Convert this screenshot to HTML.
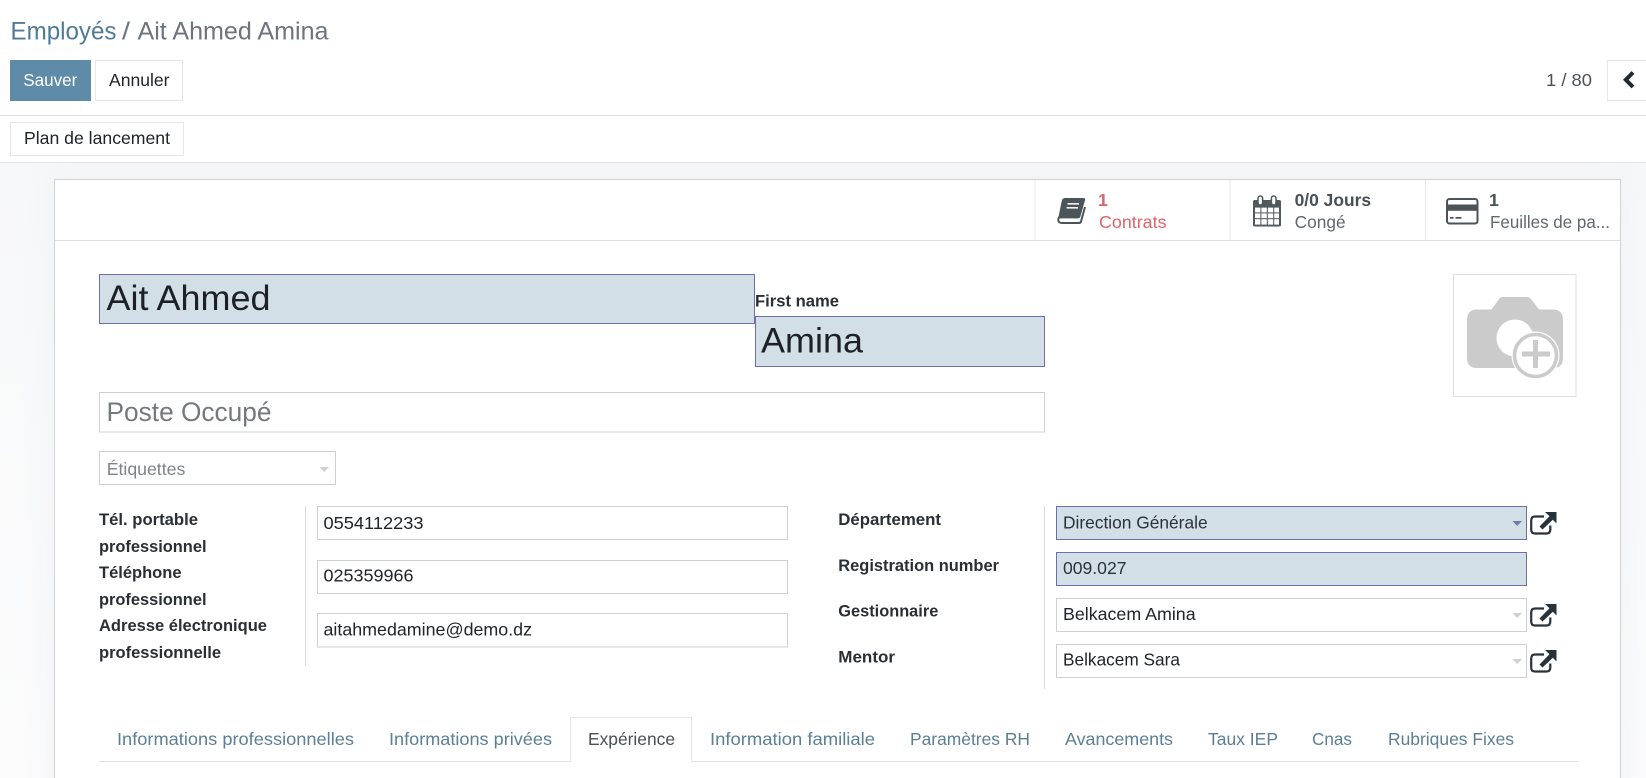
<!DOCTYPE html>
<html lang="fr">
<head>
<meta charset="utf-8">
<title>Employés / Ait Ahmed Amina</title>
<style>
html,body{margin:0;padding:0;width:1646px;height:778px;overflow:hidden;background:#fff}
svg{display:block}
text{font-family:"Liberation Sans",Arial,sans-serif;font-size:17.8px;fill:#212529}
.b{font-weight:700}
.lbl{font-size:17px;font-weight:700;fill:#2b2f33}
.tab{fill:#5b7f95;font-size:17.8px}
.box{fill:#fff;stroke:#d0d0d0;stroke-width:1}
.btn{fill:#fff;stroke:#e6e6e6;stroke-width:1}
.req{fill:#d2dfe6;stroke:#6f6fa3;stroke-width:1}
.ext{fill:none;stroke:#27323a;stroke-width:2.2}
</style>
</head>
<body>
<svg width="1646" height="778" viewBox="0 0 1646 778" xmlns="http://www.w3.org/2000/svg">
<defs>
<filter id="sh" x="-5%" y="-10%" width="110%" height="120%"><feGaussianBlur stdDeviation="14"/></filter>
<linearGradient id="bg" x1="0" y1="0" x2="0" y2="1"><stop offset="0" stop-color="#f7f8f9"/><stop offset="1" stop-color="#fcfcfd"/></linearGradient>
<g id="extlink">
<path class="ext" d="M1544 516.5 H1535 Q1531.2 516.5 1531.2 520.5 V529.5 Q1531.2 533.5 1535 533.5 H1546.5 Q1550.3 533.5 1550.3 529.5 V525.5"/>
<path d="M1545 512 H1556.5 V523.5 L1552.8 519.8 L1542.5 529.5 L1539.5 526.5 L1549.5 516.3Z" fill="#27323a"/>
</g>
</defs>

<!-- page background -->
<rect x="0" y="163" width="1646" height="615" fill="url(#bg)"/>
<rect x="46" y="172" width="1584" height="640" fill="#e9ebed" opacity=".4" filter="url(#sh)"/>

<!-- control panel -->
<rect x="0" y="0" width="1646" height="162" fill="#fff"/>
<rect x="0" y="115" width="1646" height="1" fill="#e2e2e2"/>
<rect x="0" y="162" width="1646" height="1" fill="#e2e2e2"/>

<text x="10.5" y="39.3" style="font-size:25px;fill:#4f7b96" textLength="106" lengthAdjust="spacingAndGlyphs">Employés</text>
<text x="122" y="39.3" style="font-size:25px;fill:#6c757d" textLength="8" lengthAdjust="spacingAndGlyphs">/</text>
<text x="137.5" y="39.3" style="font-size:25px;fill:#6c757d" textLength="191" lengthAdjust="spacingAndGlyphs">Ait Ahmed Amina</text>

<rect x="10" y="60" width="81" height="41" fill="#5e8ba8"/>
<text x="23.3" y="86" style="fill:#fff" textLength="54" lengthAdjust="spacingAndGlyphs">Sauver</text>
<rect class="btn" x="95.5" y="60.5" width="87" height="40"/>
<text x="109" y="86" textLength="60.5" lengthAdjust="spacingAndGlyphs">Annuler</text>

<rect class="btn" x="10.5" y="122.5" width="173" height="33"/>
<text x="24" y="144" textLength="146" lengthAdjust="spacingAndGlyphs">Plan de lancement</text>

<text x="1546" y="86" style="fill:#495057" textLength="46" lengthAdjust="spacingAndGlyphs">1 / 80</text>
<rect class="btn" x="1607.5" y="60.5" width="39" height="40"/>
<path d="M1633 72.5 L1625.8 79.8 L1633 87" fill="none" stroke="#1f2a33" stroke-width="4"/>

<!-- sheet -->
<rect x="54.5" y="179.5" width="1566" height="620" fill="#fff" stroke="#d4d4d4" stroke-width="1.1"/>
<rect x="55" y="240" width="1565.5" height="1" fill="#dedede"/>
<rect x="1034.5" y="180" width="1" height="60" fill="#e8e8e8"/>
<rect x="1229.5" y="180" width="1" height="60" fill="#e8e8e8"/>
<rect x="1425" y="180" width="1" height="60" fill="#e8e8e8"/>

<!-- book icon -->
<path d="M1065 198 H1083.5 Q1085.6 198 1085 200.2 L1080.4 216.5 Q1079.9 218.4 1077.8 218.4 H1058.2 L1061.7 201.2 Q1062.4 198 1065 198Z" fill="#4a5459"/>
<path d="M1059 217 Q1056.6 223 1062.5 223 H1079 Q1080.5 223 1081 221.5 L1085 207" fill="none" stroke="#4a5459" stroke-width="2"/>
<path d="M1067.5 203.8 H1079 M1066.6 207.8 H1078" stroke="#eef0f1" stroke-width="1.7"/>

<!-- calendar icon -->
<path d="M1253 201.5 Q1253 200 1255 200 H1279 Q1281 200 1281 201.5 V225 Q1281 226.5 1279 226.5 H1255 Q1253 226.5 1253 225 V201.5Z" fill="#4f595e"/>
<g fill="#fff">
<rect x="1255" y="207.6" width="5.4" height="4.8"/><rect x="1261.4" y="207.6" width="5.4" height="4.8"/><rect x="1267.8" y="207.6" width="5.4" height="4.8"/><rect x="1274.2" y="207.6" width="4.8" height="4.8"/>
<rect x="1255" y="213.4" width="5.4" height="4.8"/><rect x="1261.4" y="213.4" width="5.4" height="4.8"/><rect x="1267.8" y="213.4" width="5.4" height="4.8"/><rect x="1274.2" y="213.4" width="4.8" height="4.8"/>
<rect x="1255" y="219.2" width="5.4" height="5.4"/><rect x="1261.4" y="219.2" width="5.4" height="5.4"/><rect x="1267.8" y="219.2" width="5.4" height="5.4"/><rect x="1274.2" y="219.2" width="4.8" height="5.4"/>
</g>
<rect x="1258" y="196" width="4.6" height="9" rx="2.2" fill="#fff" stroke="#4f595e" stroke-width="1.5"/>
<rect x="1271.4" y="196" width="4.6" height="9" rx="2.2" fill="#fff" stroke="#4f595e" stroke-width="1.5"/>

<!-- credit card icon -->
<rect x="1447" y="199" width="30.5" height="24.5" rx="2.5" fill="#fff" stroke="#4a5459" stroke-width="2"/>
<rect x="1447" y="204.5" width="30.5" height="6.3" fill="#4a5459"/>
<rect x="1450" y="217" width="3.6" height="1.7" fill="#4a5459"/>
<rect x="1455.5" y="217" width="6" height="1.7" fill="#4a5459"/>

<text x="1098" y="206" class="b" style="fill:#d9666a">1</text>
<text x="1099" y="228" style="fill:#d9666a" textLength="67.5" lengthAdjust="spacingAndGlyphs">Contrats</text>
<text x="1294.6" y="206" class="b" style="fill:#495057" textLength="76.5" lengthAdjust="spacingAndGlyphs">0/0 Jours</text>
<text x="1294.6" y="228" style="fill:#5f686f" textLength="51" lengthAdjust="spacingAndGlyphs">Congé</text>
<text x="1489" y="206" class="b" style="fill:#495057">1</text>
<text x="1490" y="228" style="fill:#5f686f" textLength="120" lengthAdjust="spacingAndGlyphs">Feuilles de pa...</text>

<!-- name fields -->
<rect class="req" x="99.5" y="274.5" width="655" height="49"/>
<text x="106.5" y="310" style="font-size:35px;fill:#1d2125" textLength="164" lengthAdjust="spacingAndGlyphs">Ait Ahmed</text>
<text x="755" y="306.5" class="lbl" textLength="84" lengthAdjust="spacingAndGlyphs">First name</text>
<rect class="req" x="755.5" y="316.5" width="289" height="50"/>
<text x="761" y="352.5" style="font-size:35px;fill:#1d2125" textLength="102" lengthAdjust="spacingAndGlyphs">Amina</text>

<rect class="box" x="99.5" y="392.5" width="945" height="39.5"/>
<text x="106.5" y="421" style="font-size:27px;fill:#76797c" textLength="165" lengthAdjust="spacingAndGlyphs">Poste Occupé</text>

<rect class="box" x="99.5" y="451.5" width="236" height="33"/>
<text x="106.7" y="475" style="fill:#7f8488" textLength="78.6" lengthAdjust="spacingAndGlyphs">Étiquettes</text>
<path d="M319.5 467 H329 L324.2 472Z" fill="#cfcfcf"/>

<!-- avatar -->
<rect x="1453.5" y="274.5" width="122.5" height="122" fill="#fff" stroke="#e0e0e0" stroke-width="1"/>
<path d="M1502 297 H1527 Q1529 297 1531 299 L1539 309.5 H1553 Q1563 309.5 1563 320 V358 Q1563 368 1553 368 H1477 Q1467 368 1467 358 V320 Q1467 309.5 1477 309.5 H1491.5 L1499 299 Q1500.5 297 1502 297Z" fill="#cbcbcb"/>
<circle cx="1515" cy="338" r="18.5" fill="#fff"/>
<circle cx="1535.5" cy="355.5" r="24" fill="#fff"/>
<circle cx="1535.5" cy="355.5" r="21" fill="#fff" stroke="#cbcbcb" stroke-width="3.6"/>
<path d="M1522 351.5 H1533 V340 H1538 V351.5 H1550 V356.5 H1538 V368 H1533 V356.5 H1522Z" fill="#cbcbcb"/>

<!-- left group -->
<text x="99" y="525" class="lbl" textLength="99" lengthAdjust="spacingAndGlyphs">Tél. portable</text>
<text x="99" y="552" class="lbl" textLength="107.5" lengthAdjust="spacingAndGlyphs">professionnel</text>
<text x="99" y="578" class="lbl" textLength="82.5" lengthAdjust="spacingAndGlyphs">Téléphone</text>
<text x="99" y="605" class="lbl" textLength="107.5" lengthAdjust="spacingAndGlyphs">professionnel</text>
<text x="99" y="631" class="lbl" textLength="168" lengthAdjust="spacingAndGlyphs">Adresse électronique</text>
<text x="99" y="658" class="lbl" textLength="122" lengthAdjust="spacingAndGlyphs">professionnelle</text>
<rect x="305" y="506" width="1" height="160" fill="#dcdcdc"/>

<rect class="box" x="317.5" y="506.5" width="470" height="33"/>
<text x="323.5" y="529" textLength="100" lengthAdjust="spacingAndGlyphs">0554112233</text>
<rect class="box" x="317.5" y="560.5" width="470" height="33"/>
<text x="323.5" y="581.7" textLength="90" lengthAdjust="spacingAndGlyphs">025359966</text>
<rect class="box" x="317.5" y="613.5" width="470" height="33.5"/>
<text x="323.5" y="635.5" textLength="208.5" lengthAdjust="spacingAndGlyphs">aitahmedamine@demo.dz</text>

<!-- right group -->
<text x="838.3" y="525" class="lbl" textLength="102.7" lengthAdjust="spacingAndGlyphs">Département</text>
<text x="838.3" y="571" class="lbl" textLength="160.7" lengthAdjust="spacingAndGlyphs">Registration number</text>
<text x="838.3" y="616.7" class="lbl" textLength="100" lengthAdjust="spacingAndGlyphs">Gestionnaire</text>
<text x="838.3" y="662.7" class="lbl" textLength="56.7" lengthAdjust="spacingAndGlyphs">Mentor</text>
<rect x="1044" y="506" width="1" height="183" fill="#dcdcdc"/>

<rect class="req" x="1056.5" y="506.5" width="470" height="33"/>
<text x="1063" y="528.5" style="fill:#2b333a" textLength="144.6" lengthAdjust="spacingAndGlyphs">Direction Générale</text>
<path d="M1512.5 521 H1522 L1517.2 526Z" fill="#6b7fa8"/>
<rect class="req" x="1056.5" y="552.5" width="470" height="33"/>
<text x="1063" y="574" style="fill:#2b333a" textLength="63.5" lengthAdjust="spacingAndGlyphs">009.027</text>
<rect class="box" x="1056.5" y="598.5" width="470" height="33"/>
<text x="1063" y="620" textLength="132.6" lengthAdjust="spacingAndGlyphs">Belkacem Amina</text>
<path d="M1512.5 613 H1522 L1517.2 618Z" fill="#cfcfcf"/>
<rect class="box" x="1056.5" y="644.5" width="470" height="33"/>
<text x="1063" y="665.6" textLength="117" lengthAdjust="spacingAndGlyphs">Belkacem Sara</text>
<path d="M1512.5 659 H1522 L1517.2 664Z" fill="#cfcfcf"/>

<!-- external link icons -->
<use href="#extlink"/>
<use href="#extlink" transform="translate(0 92)"/>
<use href="#extlink" transform="translate(0 138)"/>

<!-- tabs -->
<rect x="99" y="761" width="1479" height="1" fill="#e2e2e2"/>
<rect x="570.5" y="717.5" width="121" height="44.5" fill="#fff" stroke="#e6e6e6" stroke-width="1"/>
<rect x="571" y="760" width="120" height="3" fill="#fff"/>
<text x="117" y="745" class="tab" textLength="237" lengthAdjust="spacingAndGlyphs">Informations professionnelles</text>
<text x="389" y="745" class="tab" textLength="163" lengthAdjust="spacingAndGlyphs">Informations privées</text>
<text x="588" y="745" style="fill:#495057" textLength="87" lengthAdjust="spacingAndGlyphs">Expérience</text>
<text x="710" y="745" class="tab" textLength="165" lengthAdjust="spacingAndGlyphs">Information familiale</text>
<text x="910" y="745" class="tab" textLength="120" lengthAdjust="spacingAndGlyphs">Paramètres RH</text>
<text x="1065" y="745" class="tab" textLength="108" lengthAdjust="spacingAndGlyphs">Avancements</text>
<text x="1208" y="745" class="tab" textLength="70" lengthAdjust="spacingAndGlyphs">Taux IEP</text>
<text x="1312" y="745" class="tab" textLength="40" lengthAdjust="spacingAndGlyphs">Cnas</text>
<text x="1388" y="745" class="tab" textLength="126" lengthAdjust="spacingAndGlyphs">Rubriques Fixes</text>
</svg>
</body>
</html>
